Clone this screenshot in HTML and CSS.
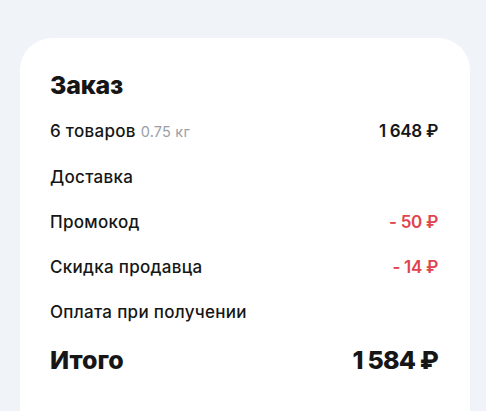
FILE: index.html
```html
<!DOCTYPE html>
<html lang="ru">
<head>
<meta charset="utf-8">
<link rel="stylesheet" href="styles.css">
</head>
<body>
<div class="page">
  <section class="card">
    <h2 class="title">Заказ</h2>
    <div class="rows">
      <div class="row"><span class="label">6 товаров <span class="weight">0.75 кг</span></span><span class="value">1 648 ₽</span></div>
      <div class="row"><span class="label">Доставка</span></div>
      <div class="row"><span class="label">Промокод</span><span class="value red">- 50 ₽</span></div>
      <div class="row"><span class="label">Скидка продавца</span><span class="value red">- 14 ₽</span></div>
      <div class="row"><span class="label">Оплата при получении</span></div>
    </div>
    <div class="total"><span class="total-label">Итого</span><span class="total-value">1 584 ₽</span></div>
  </section>
</div>
</body>
</html>
```
FILE: styles.css
```css
html, body {
  margin: 0;
  padding: 0;
  background: #f0f3f7;
  font-family: Inter, "Noto Sans", sans-serif;
  color: #161616;
}
.page {
  padding: 38px 16px 0 20px;
  height: 411px;
  box-sizing: border-box;
  overflow: hidden;
}
.card {
  background: #fff;
  border-radius: 32px;
  padding: 32px 32px 60px 30px;
  height: 420px;
  box-sizing: border-box;
}
.title {
  margin: 0;
  font-size: 25px;
  font-weight: 800;
  line-height: 30px;
  letter-spacing: -0.2px;
}
.rows {
  margin-top: 21px;
  display: flex;
  flex-direction: column;
  gap: 25px;
}
.row {
  display: flex;
  justify-content: space-between;
  align-items: baseline;
  font-size: 17px;
  line-height: 20px;
  font-weight: 500;
  letter-spacing: 0.3px;
}
.weight {
  font-size: 14.5px;
  color: #9aa0a6;
  font-weight: 400;
  letter-spacing: 0.2px;
}
.value {
  font-weight: 600;
  letter-spacing: -0.3px;
}
.red {
  color: #e0444e;
}
.total {
  margin-top: 23px;
  display: flex;
  justify-content: space-between;
  font-size: 25px;
  line-height: 30px;
  font-weight: 800;
}
.total-label {
  letter-spacing: 0;
}
.total-value {
  letter-spacing: -0.8px;
}
```
